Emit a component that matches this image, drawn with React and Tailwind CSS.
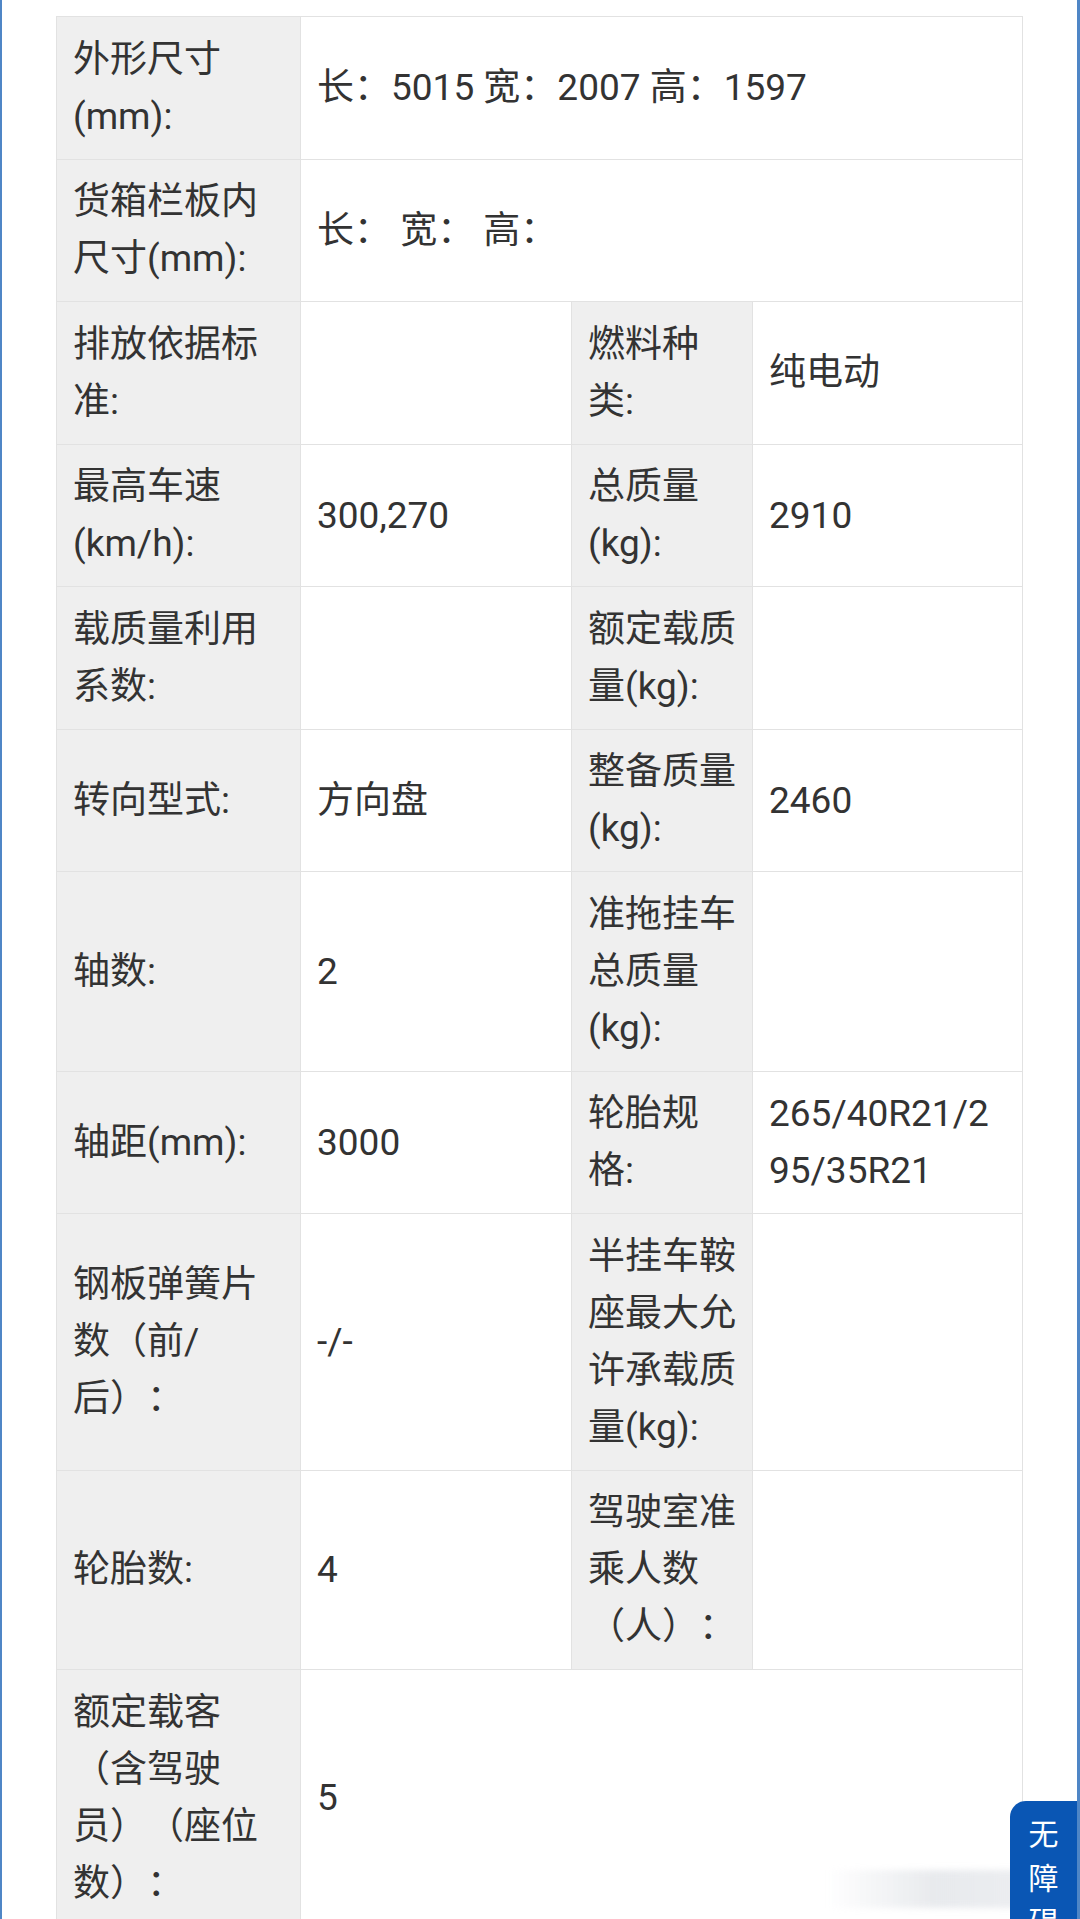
import { Fragment } from "react";

const rows = [
  { cells: [["外形尺寸(mm):", "长：5015 宽：2007 高：1597"]], span: true },
  { cells: [["货箱栏板内尺寸(mm):", "长： 宽： 高："]], span: true },
  { cells: [["排放依据标准:", ""], ["燃料种类:", "纯电动"]] },
  { cells: [["最高车速(km/h):", "300,270"], ["总质量(kg):", "2910"]] },
  { cells: [["载质量利用系数:", ""], ["额定载质量(kg):", ""]] },
  { cells: [["转向型式:", "方向盘"], ["整备质量(kg):", "2460"]] },
  { cells: [["轴数:", "2"], ["准拖挂车总质量(kg):", ""]] },
  { cells: [["轴距(mm):", "3000"], ["轮胎规格:", "265/40R21/295/35R21"]] },
  { cells: [["钢板弹簧片数（前/后）：", "-/-"], ["半挂车鞍座最大允许承载质量(kg):", ""]] },
  { cells: [["轮胎数:", "4"], ["驾驶室准乘人数（人）：", ""]] },
  { cells: [["额定载客（含驾驶员）（座位数）：", "5"]], span: true },
];

const cellBase =
  "border border-[#e2e2e2] pl-4 py-[13.75px] align-middle text-[37px] leading-[57px] text-[#333] [text-spacing-trim:space-all]";

const Label = ({ children }) => (
  <td className={`${cellBase} pr-3 bg-[#efefef]`}>{children}</td>
);

const Value = ({ children, span }) => (
  <td colSpan={span ? 3 : 1} className={`${cellBase} pr-4 bg-white break-all`}>
    {children}
  </td>
);

export default function App() {
  return (
    <div
      className="relative w-[1080px] h-[1919px] overflow-hidden bg-white border-l-2 border-r-[3px] border-[#4f86c6]"
      style={{ fontFamily: 'Roboto, "Noto Sans CJK SC", sans-serif' }}
    >
      <div className="pt-[16px] pl-[54px]">
        <table className="table-fixed border-collapse w-[966px]">
          <colgroup>
            <col className="w-[244px]" />
            <col className="w-[271px]" />
            <col className="w-[181px]" />
            <col className="w-[270px]" />
          </colgroup>
          <tbody>
            {rows.map((row, i) => (
              <tr key={i}>
                {row.cells.map(([label, value], j) => (
                  <Fragment key={j}>
                    <Label>{label}</Label>
                    <Value span={row.span}>{value}</Value>
                  </Fragment>
                ))}
              </tr>
            ))}
          </tbody>
        </table>
      </div>

      {/* blurred toast remnant over the corner */}
      <div className="absolute left-[826px] top-[1870px] w-[215px] h-[38px] bg-gradient-to-r from-white/0 via-gray-300/50 to-gray-200/70 blur-[3px]" />

      <div className="absolute right-0 top-[1801px] w-[67px] h-[140px] rounded-tl-[16px] bg-[#0a56b4] flex flex-col items-center pt-[12px] text-white text-[30px] leading-[44px]">
        <span>无</span>
        <span>障</span>
        <span>碍</span>
      </div>
    </div>
  );
}
